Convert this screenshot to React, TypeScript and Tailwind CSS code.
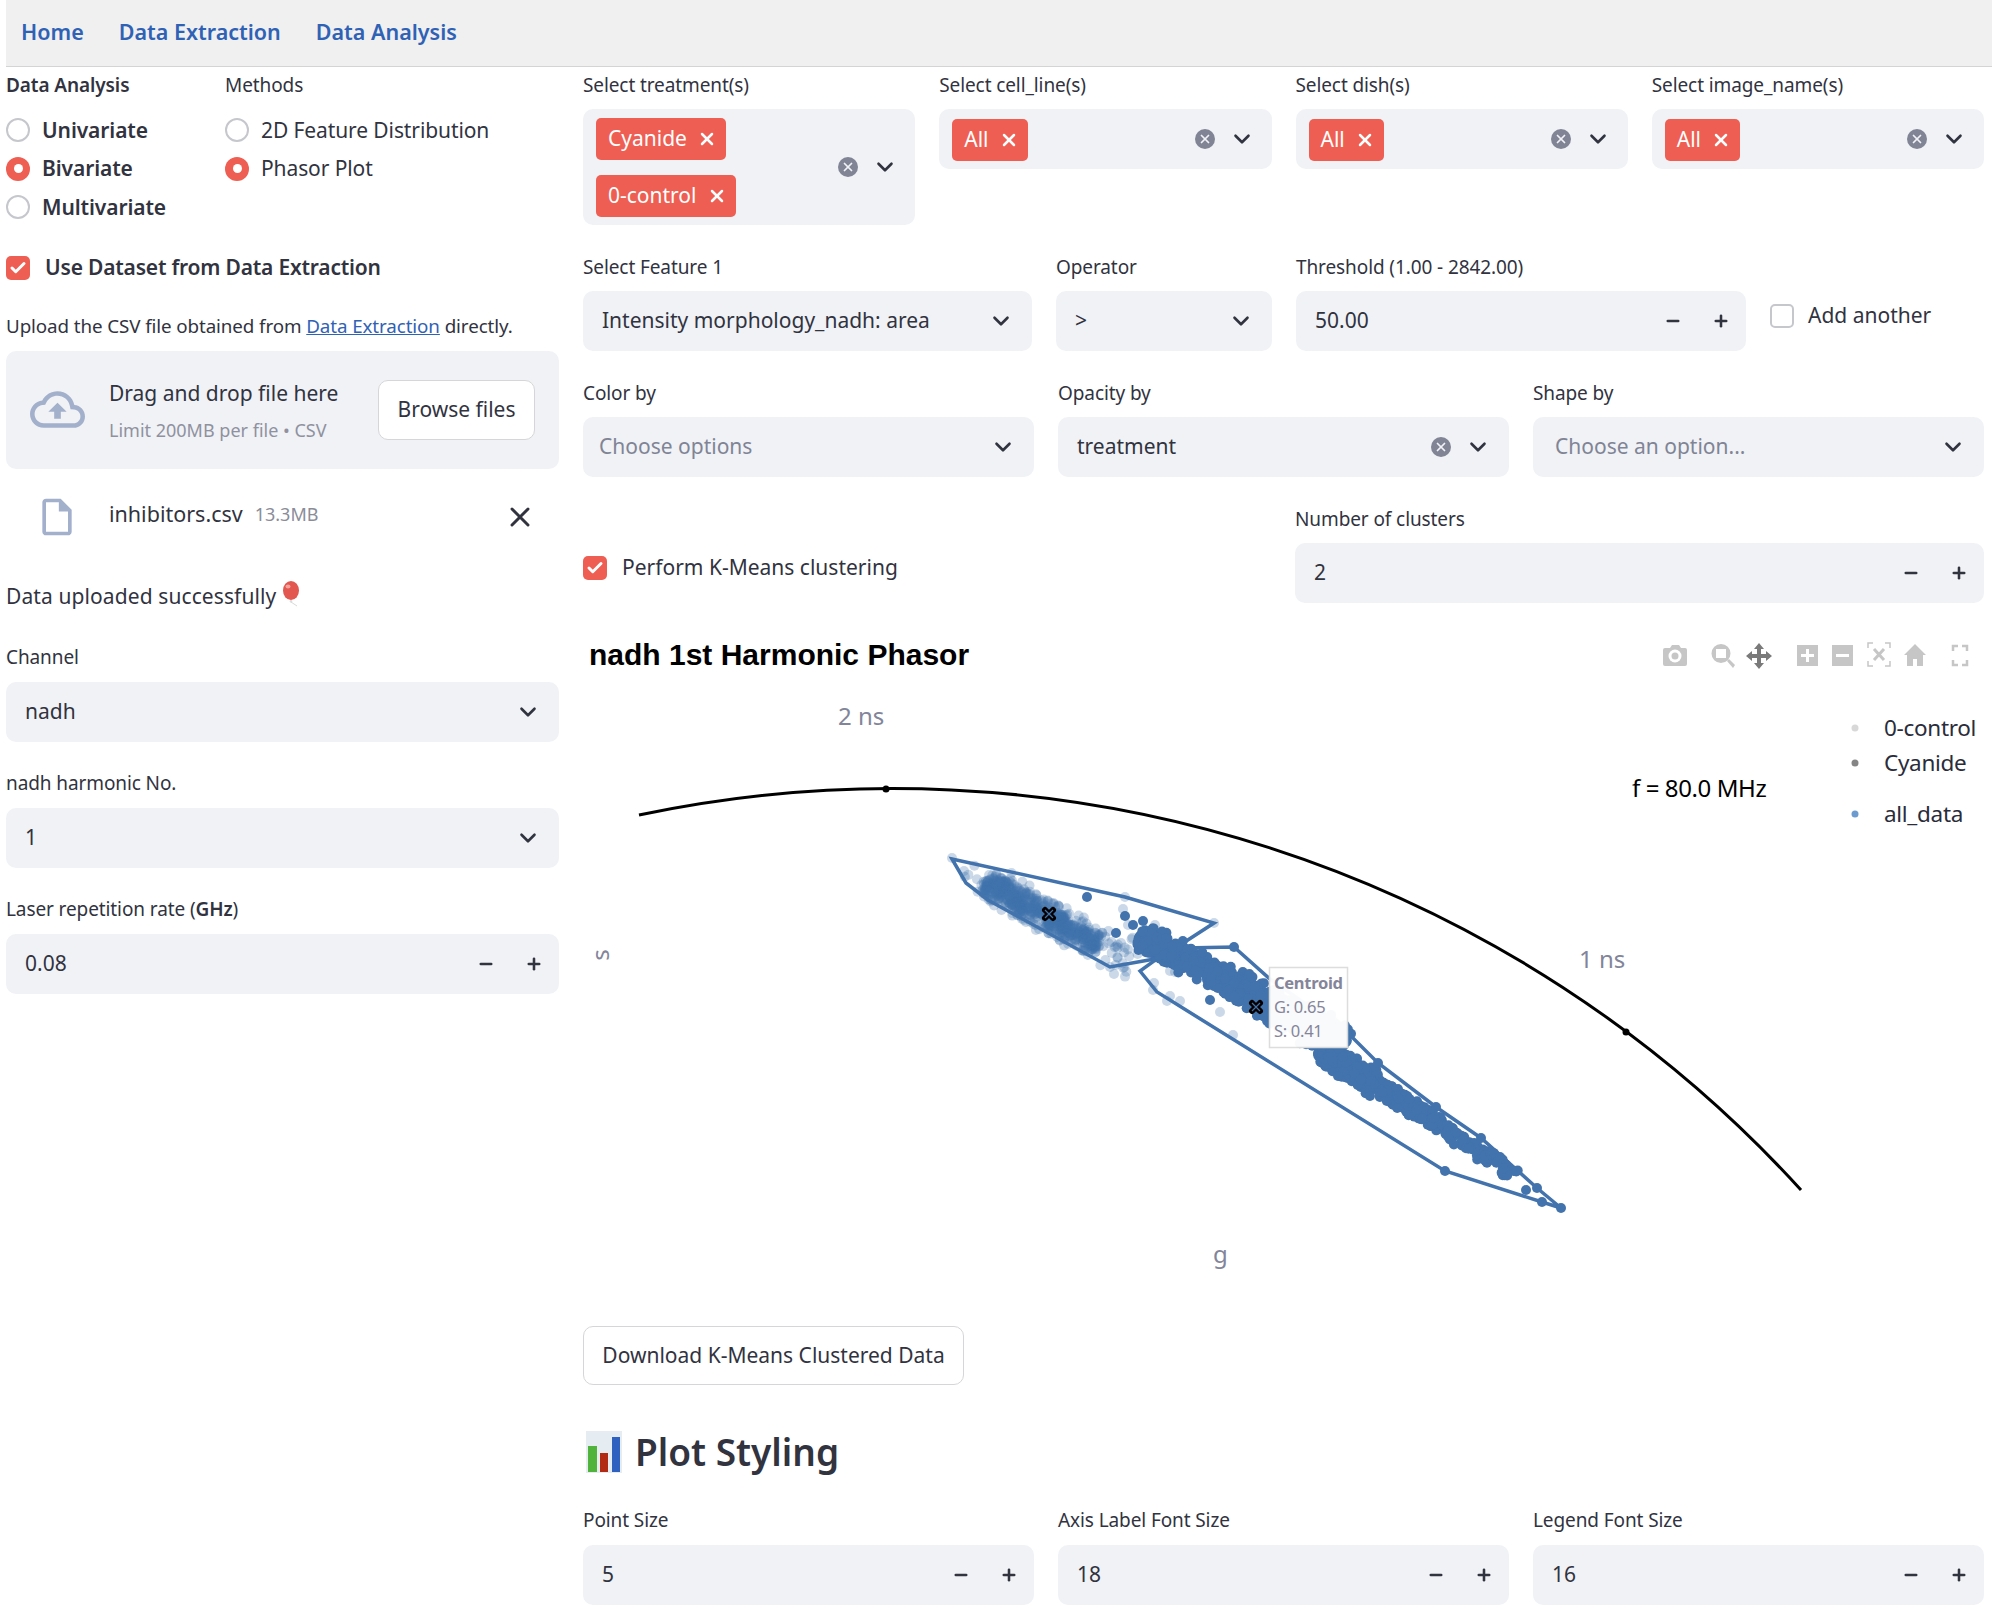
import * as React from 'react';
import { ChevronDown, Minus, Plus, X, Check } from 'lucide-react';

const BLUE = '#4273ad';

// small seeded generator so the scatter stays the same between renders
function makeRandom(seed: number) {
  let s = seed;
  return () => {
    s = (s + 0x6d2b79f5) | 0;
    let t = Math.imul(s ^ (s >>> 15), 1 | s);
    t = (t + Math.imul(t ^ (t >>> 7), 61 | t)) ^ t;
    return ((t ^ (t >>> 14)) >>> 0) / 4294967296;
  };
}

type Pt = [number, number];

function band(seed: number, from: Pt, to: Pt, count: number, sigma: number, endSigma = sigma): Pt[] {
  const rnd = makeRandom(seed);
  const dx = to[0] - from[0];
  const dy = to[1] - from[1];
  const len = Math.hypot(dx, dy);
  const out: Pt[] = [];
  for (let i = 0; i < count; i++) {
    const t = rnd();
    const g = (rnd() + rnd() + rnd() - 1.5) * 1.2;
    const off = g * (sigma + (endSigma - sigma) * t);
    out.push([from[0] + dx * t - (dy / len) * off, from[1] + dy * t + (dx / len) * off]);
  }
  return out;
}

const lightPoints: Pt[] = [
  ...band(1, [985, 882], [1100, 946], 650, 13, 11),
  ...band(2, [968, 872], [990, 888], 14, 9),
  ...band(3, [1090, 935], [1135, 962], 34, 16),
  ...([
    [952, 858], [964, 871], [1125, 897], [1214, 923], [1123, 909], [1128, 925], [1155, 925], [1153, 990], [1167, 1001], [1180, 1001], [1170, 996],
    [1220, 1012], [1233, 1035], [1262, 1005], [1175, 972], [1170, 971], [1154, 983], [1110, 967],
  ] as Pt[]),
];

const darkPoints: Pt[] = [
  ...band(4, [1140, 935], [1345, 1045], 900, 9, 14),
  ...band(5, [1320, 1050], [1440, 1125], 520, 9, 6),
  ...band(6, [1430, 1118], [1490, 1160], 70, 6, 5),
  ...band(7, [1485, 1150], [1520, 1180], 22, 6, 5),
  ...([
    [1087, 897], [1125, 916], [1116, 933], [1133, 925], [1143, 921], [1209, 968], [1255, 986], [1210, 1000], [1280, 1000], [1370, 1096],
    [1338, 1076], [1526, 1190], [1537, 1188], [1542, 1202], [1561, 1208], [1445, 1171], [1481, 1138], [1500, 1157], [1378, 1063],
    [1436, 1107], [1234, 947],
  ] as Pt[]),
];

function FieldLabel({ children, className = 'mb-[12px]' }: { children: React.ReactNode; className?: string }) {
  return <div className={`h-[24px] leading-[24px] text-[19px] tracking-[-0.1px] text-[#31333f] ${className}`}>{children}</div>;
}

function Tag({ children }: { children: React.ReactNode }) {
  return (
    <span className="inline-flex h-[42px] items-center rounded-[5px] bg-[#ee5e52] pl-[12px] pr-[9px] text-[21px] text-white">
      {children}
      <X className="ml-[10px] size-[20px]" strokeWidth={3} />
    </span>
  );
}

function ClearIcon() {
  return (
    <span className="flex size-[20px] items-center justify-center rounded-full bg-[#808495] text-[#f0f2f6]">
      <X className="size-[14px]" strokeWidth={3} />
    </span>
  );
}

function Multi({ tags }: { tags: string[] }) {
  return (
    <div className="flex min-h-[60px] w-full items-center rounded-[10px] bg-[#f0f2f6] pl-[13px] pr-[17px]">
      <div className="flex flex-1 flex-col items-start gap-[15px] pt-[9px] pb-[8px]">
        {tags.map((t) => (
          <Tag key={t}>{t}</Tag>
        ))}
      </div>
      <ClearIcon />
      <ChevronDown className="ml-[14px] size-[26px] text-[#31333f]" strokeWidth={2.4} />
    </div>
  );
}

function Select({
  value,
  placeholder,
  clear,
  padLeft = 'pl-[19px]',
}: {
  value: string;
  placeholder?: boolean;
  clear?: boolean;
  padLeft?: string;
}) {
  return (
    <div className={`flex h-[60px] items-center rounded-[10px] bg-[#f0f2f6] pr-[18px] ${padLeft}`}>
      <span className={`flex-1 text-[21px] ${placeholder ? 'text-[#808495]' : 'text-[#31333f]'}`}>{value}</span>
      {clear && <ClearIcon />}
      <ChevronDown className="ml-[14px] size-[26px] text-[#31333f]" strokeWidth={2.4} />
    </div>
  );
}

function NumberBox({ value }: { value: string }) {
  return (
    <div className="flex h-[60px] items-center rounded-[10px] bg-[#f0f2f6] pl-[19px] pr-[16px]">
      <span className="flex-1 text-[21px] text-[#31333f]">{value}</span>
      <Minus className="size-[18px] text-[#31333f]" strokeWidth={3.4} />
      <Plus className="ml-[30px] size-[18px] text-[#31333f]" strokeWidth={3.4} />
    </div>
  );
}

function Radio({ label, on, bold }: { label: string; on?: boolean; bold?: boolean }) {
  return (
    <div className="flex h-[38.5px] items-center">
      {on ? (
        <span className="flex size-[24px] items-center justify-center rounded-full bg-[#ee5e52]">
          <span className="size-[9px] rounded-full bg-white" />
        </span>
      ) : (
        <span className="size-[24px] rounded-full border-2 border-[#c6c7cc] bg-white" />
      )}
      <span className={`ml-[12px] text-[21px] tracking-[-0.1px] text-[#31333f] ${bold ? 'font-semibold' : ''}`}>{label}</span>
    </div>
  );
}

function RedCheck() {
  return (
    <span className="flex size-[24px] items-center justify-center rounded-[5px] bg-[#ee5e52]">
      <Check className="size-[18px] text-white" strokeWidth={4} />
    </span>
  );
}

function Balloon() {
  return (
    <svg className="ml-[6px] mb-[6px] inline-block" width="20" height="26" viewBox="0 0 20 26">
      <ellipse cx="9" cy="9.5" rx="8" ry="9.5" fill="#e2574f" />
      <ellipse cx="6" cy="5.5" rx="2.5" ry="2" fill="#f3a29c" />
      <path d="M9 19l-1 2h2zM9 21q3 2 6 4" fill="none" stroke="#d9d9d9" strokeWidth="1" />
    </svg>
  );
}

function Modebar() {
  return (
    <svg width="320" height="40" viewBox="1650 635 320 40" className="block">
      <g fill="#c6c6c6">
        {/* camera */}
        <path d="M1665 649h5l2-3h7l2 3h4a2 2 0 0 1 2 2v14a2 2 0 0 1-2 2h-20a2 2 0 0 1-2-2v-14a2 2 0 0 1 2-2z" />
        <circle cx="1675" cy="657" r="6.5" fill="#fff" />
        <circle cx="1675" cy="657" r="3.5" />
        {/* zoom */}
        <path d="M1721 645a9.5 9.5 0 1 0 0 19 9.5 9.5 0 0 0 0-19zm-5 5h10v9h-10z" fillRule="evenodd" />
        <path d="M1727 662l2-2 6 6-2 3z" />
        {/* zoom in */}
        <path d="M1797 646h21v21h-21zM1806 650v5h-5v3h5v5h3v-5h5v-3h-5v-5z" fillRule="evenodd" />
        {/* zoom out */}
        <path d="M1832 646h21v21h-21zM1836 655v3h13v-3z" fillRule="evenodd" />
        {/* home */}
        <path d="M1915 645l11 11h-3v11h-6v-7h-4v7h-6v-11h-3z" />
      </g>
      {/* pan */}
      <path
        d="M1759 644l5 6h-3v5h5v-3l6 5-6 5v-3h-5v5h3l-5 6-5-6h3v-5h-5v3l-6-5 6-5v3h5v-5h-3z"
        fill="#7a7a7a"
      />
      {/* autoscale */}
      <g fill="none" stroke="#c6c6c6" strokeWidth="1.5">
        <path d="M1873 644h-5v5M1885 644h5v5M1873 667h-5v-5M1885 667h5v-5" />
        <path d="M1874 650l10 11M1884 650l-10 11" strokeWidth="3" />
      </g>
      {/* fullscreen */}
      <path d="M1953 652v-5h5M1962 647h5v5M1953 661v5h5M1962 666h5v-5" fill="none" stroke="#c6c6c6" strokeWidth="2.5" />
    </svg>
  );
}

function CentroidMark({ x, y }: { x: number; y: number }) {
  const d = `M${x - 4} ${y - 4}L${x + 4} ${y + 4}M${x + 4} ${y - 4}L${x - 4} ${y + 4}`;
  return (
    <g>
      <path d={d} stroke="#000" strokeWidth="6" strokeLinecap="round" />
      <path d={d} stroke="#4273ad" strokeWidth="1.2" />
    </g>
  );
}

function PhasorChart() {
  const textFont = { fontFamily: '"Noto Sans", sans-serif' };
  const hull1 = '952,859 1125,897 1214,923 1160,958 1110,967 988,900 966,883';
  const hull2 =
    '1140,971 1157,992 1445,1171 1542,1202 1561,1208 1537,1188 1481,1138 1436,1107 1378,1063 1350,1035 1270,979 1234,947 1183,948 1158,958';
  return (
    <svg width="1401" height="600" viewBox="583 690 1401 600" className="block" style={textFont}>
      {/* universal circle */}
      <path d="M639 815A1228 1228 0 0 1 1801 1190" fill="none" stroke="#000" strokeWidth="3" />
      <circle cx="886" cy="789" r="3.5" fill="#000" />
      <circle cx="1626" cy="1032" r="3.5" fill="#000" />

      {lightPoints.map(([x, y], i) => (
        <circle key={i} cx={x} cy={y} r="5" fill={BLUE} opacity="0.28" />
      ))}
      <polygon points={hull1} fill="none" stroke={BLUE} strokeWidth="3.5" />
      <polygon points={hull2} fill="none" stroke={BLUE} strokeWidth="3.5" />
      {darkPoints.map(([x, y], i) => (
        <circle key={i} cx={x} cy={y} r="5" fill={BLUE} />
      ))}
      <CentroidMark x={1049} y={914} />
      <CentroidMark x={1256} y={1007} />

      {/* tooltip */}
      <rect x="1269.5" y="967.5" width="78" height="80" fill="#fff" stroke="#dcdcdc" strokeWidth="1.5" opacity="0.97" />
      <g fontSize="16.5" fill="#85859a" letterSpacing="-0.3">
        <text x="1274" y="989" fontWeight="700">Centroid</text>
        <text x="1274" y="1013">G: 0.65</text>
        <text x="1274" y="1037">S: 0.41</text>
      </g>

      <g fontSize="24" fill="#82859a">
        <text x="838" y="725">2 ns</text>
        <text x="1579" y="968">1 ns</text>
        <text x="1213" y="1263">g</text>
        <text transform="translate(609 955) rotate(-90)" textAnchor="middle">s</text>
      </g>
      <text x="1632" y="797" fontSize="24" letterSpacing="-0.4" fill="#000">f = 80.0 MHz</text>

      <circle cx="1855" cy="728" r="3.5" fill="#d8d8d8" />
      <circle cx="1855" cy="763" r="3.5" fill="#858585" />
      <circle cx="1855" cy="814" r="3.5" fill="#6c9bd0" />
      <g fontSize="22.5" fill="#2a2c3a" letterSpacing="-0.3">
        <text x="1884" y="736">0-control</text>
        <text x="1884" y="771">Cyanide</text>
        <text x="1884" y="822">all_data</text>
      </g>
    </svg>
  );
}

function BarChartEmoji() {
  return (
    <svg width="36" height="42" viewBox="0 0 36 42" className="block">
      <rect width="36" height="42" fill="#e6edf2" />
      <rect x="2" y="15" width="9" height="26" fill="#4fb33c" />
      <rect x="14" y="22" width="8" height="19" fill="#b32a14" />
      <rect x="26" y="6" width="8" height="35" fill="#2f62c0" />
    </svg>
  );
}

export default function App() {
  return (
    <div className="h-[1616px] w-[1992px] overflow-hidden bg-white font-['Noto_Sans',sans-serif] text-[#31333f]">
      <nav className="ml-[6px] flex h-[67px] items-center gap-[35px] border-b border-[#d4d4d4] bg-[#f0f0f0] pl-[15px] pb-[2px] text-[21.5px] font-semibold text-[#2f62b5]">
        <span>Home</span>
        <span>Data Extraction</span>
        <span>Data Analysis</span>
      </nav>

      <div className="flex pl-[6px] pt-[6px]">
        {/* left column */}
        <aside className="w-[553px] shrink-0">
          <div className="flex">
            <div className="w-[219px]">
              <FieldLabel className="mb-[14px] font-semibold">Data Analysis</FieldLabel>
              <Radio label="Univariate" bold />
              <Radio label="Bivariate" bold on />
              <Radio label="Multivariate" bold />
            </div>
            <div>
              <FieldLabel className="mb-[14px]">Methods</FieldLabel>
              <Radio label="2D Feature Distribution" />
              <Radio label="Phasor Plot" on />
            </div>
          </div>

          <div className="mt-[26px] flex h-[30px] items-center">
            <RedCheck />
            <span className="ml-[15px] text-[21px] font-semibold tracking-[-0.2px]">Use Dataset from Data Extraction</span>
          </div>

          <p className="mt-[29px] h-[28px] text-[18.8px] leading-[28px] tracking-[-0.1px]">
            Upload the CSV file obtained from <span className="text-[#2f62b5] underline">Data Extraction</span> directly.
          </p>

          <div className="mt-[11px] flex h-[118px] items-center rounded-[10px] bg-[#f0f2f6] pl-[24px] pr-[24px]">
            <svg width="55" height="55" viewBox="0 0 24 24" fill="#a3b0cb" className="shrink-0">
              <path d="M19.35 10.04C18.67 6.59 15.64 4 12 4 9.11 4 6.6 5.64 5.35 8.04 2.34 8.36 0 10.91 0 14c0 3.31 2.69 6 6 6h13c2.76 0 5-2.24 5-5 0-2.64-2.05-4.78-4.65-4.96zM19 18H6c-2.21 0-4-1.79-4-4 0-2.05 1.53-3.76 3.56-3.97l1.07-.11.5-.95C8.08 7.14 9.94 6 12 6c2.62 0 4.88 1.86 5.39 4.43l.3 1.5 1.53.11c1.56.1 2.78 1.41 2.78 2.96 0 1.65-1.35 3-3 3zM8 13h2.55v3h2.9v-3H16l-4-4z" />
            </svg>
            <div className="ml-[24px] flex-1">
              <div className="text-[21px] leading-[28px] text-[#31333f]">Drag and drop file here</div>
              <div className="mt-[12px] text-[18px] leading-[22px] text-[#8f919f]">Limit 200MB per file • CSV</div>
            </div>
            <button className="h-[60px] w-[157px] rounded-[10px] border border-[#d6d6d9] bg-white text-[21px] text-[#31333f]">
              Browse files
            </button>
          </div>

          <div className="mt-[26px] flex h-[44px] items-center">
            <svg width="44" height="44" viewBox="0 0 24 24" fill="#a3b0cb" className="ml-[29px] shrink-0">
              <path d="M14 2H6c-1.1 0-1.99.9-1.99 2L4 20c0 1.1.89 2 1.99 2H18c1.1 0 2-.9 2-2V8l-6-6zM6 20V4h7v5h5v11H6z" />
            </svg>
            <span className="ml-[30px] mb-[4px] text-[21.5px]">inhibitors.csv</span>
            <span className="ml-[12px] mb-[4px] flex-1 text-[18px] text-[#8a8c99]">13.3MB</span>
            <X className="mr-[23px] size-[32px] text-[#31333f]" strokeWidth={2.2} />
          </div>

          <div className="mt-[40px] flex h-[36px] items-center text-[21px] tracking-[0.1px]">
            Data uploaded successfully
            <Balloon />
          </div>

          <div className="mt-[30px]">
            <FieldLabel className="mb-[13px]">Channel</FieldLabel>
            <Select value="nadh" />
          </div>
          <div className="mt-[29px]">
            <FieldLabel className="mb-[13px]">nadh harmonic No.</FieldLabel>
            <Select value="1" />
          </div>
          <div className="mt-[29px]">
            <FieldLabel className="mb-[13px]">
              Laser repetition rate (<span className="font-semibold">GHz</span>)
            </FieldLabel>
            <NumberBox value="0.08" />
          </div>
        </aside>

        {/* right column */}
        <main className="ml-[24px] w-[1401px] shrink-0">
          <div className="grid grid-cols-4 items-start gap-x-[24px]">
            <div>
              <FieldLabel>Select treatment(s)</FieldLabel>
              <Multi tags={['Cyanide', '0-control']} />
            </div>
            <div>
              <FieldLabel>Select cell_line(s)</FieldLabel>
              <Multi tags={['All']} />
            </div>
            <div>
              <FieldLabel>Select dish(s)</FieldLabel>
              <Multi tags={['All']} />
            </div>
            <div>
              <FieldLabel>Select image_name(s)</FieldLabel>
              <Multi tags={['All']} />
            </div>
          </div>

          <div className="mt-[30px] flex gap-x-[24px]">
            <div className="w-[449px]">
              <FieldLabel>Select Feature 1</FieldLabel>
              <Select value="Intensity morphology_nadh: area" />
            </div>
            <div className="w-[216px]">
              <FieldLabel>Operator</FieldLabel>
              <Select value=">" />
            </div>
            <div className="w-[450px]">
              <FieldLabel>Threshold (1.00 - 2842.00)</FieldLabel>
              <NumberBox value="50.00" />
            </div>
            <div className="mt-[49px] flex h-[24px] items-center">
              <span className="size-[24px] rounded-[5px] border-2 border-[#c6c7cc] bg-white" />
              <span className="ml-[14px] text-[21px]">Add another</span>
            </div>
          </div>

          <div className="mt-[30px] grid grid-cols-3 gap-x-[24px]">
            <div>
              <FieldLabel>Color by</FieldLabel>
              <Select value="Choose options" placeholder padLeft="pl-[16px]" />
            </div>
            <div>
              <FieldLabel>Opacity by</FieldLabel>
              <Select value="treatment" clear />
            </div>
            <div>
              <FieldLabel>Shape by</FieldLabel>
              <Select value="Choose an option..." placeholder padLeft="pl-[22px]" />
            </div>
          </div>

          <div className="mt-[30px] flex">
            <div className="mt-[49px] flex h-[24px] w-[712px] items-center">
              <RedCheck />
              <span className="ml-[15px] text-[21px]">Perform K-Means clustering</span>
            </div>
            <div className="flex-1">
              <FieldLabel>Number of clusters</FieldLabel>
              <NumberBox value="2" />
            </div>
          </div>

          <div className="mt-[31px] mb-[16px] flex h-[40px] items-center justify-between pl-[6px] pr-[14px]">
            <h2 className="font-['Liberation_Sans',sans-serif] text-[30px] font-bold text-black">nadh 1st Harmonic Phasor</h2>
            <Modebar />
          </div>

          <PhasorChart />

          <button className="mt-[36px] h-[59px] w-[381px] rounded-[10px] border border-[#d6d6d9] bg-white text-[21px] text-[#31333f]">
            Download K-Means Clustered Data
          </button>

          <div className="mt-[43px] flex h-[48px] items-center">
            <span className="ml-[3px]">
              <BarChartEmoji />
            </span>
            <h3 className="ml-[13px] text-[37px] font-semibold text-[#31333f]">Plot Styling</h3>
          </div>

          <div className="mt-[32px] grid grid-cols-3 gap-x-[24px]">
            <div>
              <FieldLabel className="mb-[13px]">Point Size</FieldLabel>
              <NumberBox value="5" />
            </div>
            <div>
              <FieldLabel className="mb-[13px]">Axis Label Font Size</FieldLabel>
              <NumberBox value="18" />
            </div>
            <div>
              <FieldLabel className="mb-[13px]">Legend Font Size</FieldLabel>
              <NumberBox value="16" />
            </div>
          </div>
        </main>
      </div>
    </div>
  );
}
